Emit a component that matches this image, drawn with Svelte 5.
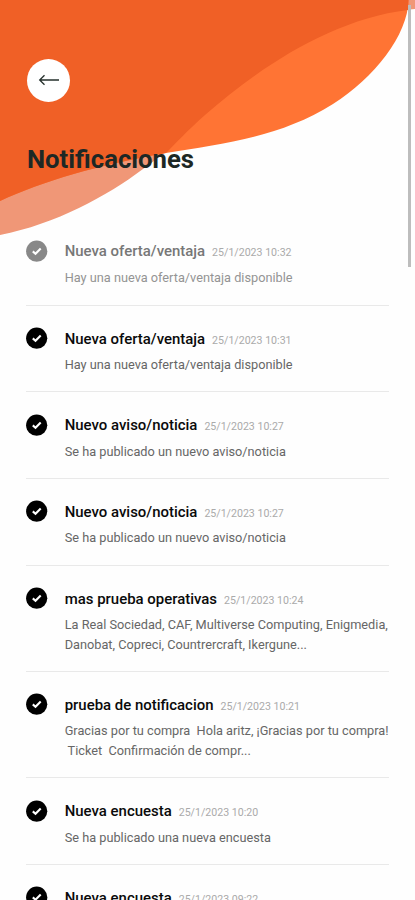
<script lang="ts">
  interface Notification {
    title: string;
    date: string;
    lines: string[];
    read?: boolean;
  }

  const notifications: Notification[] = [
    { title: "Nueva oferta/ventaja", date: "25/1/2023 10:32", lines: ["Hay una nueva oferta/ventaja disponible"], read: true },
    { title: "Nueva oferta/ventaja", date: "25/1/2023 10:31", lines: ["Hay una nueva oferta/ventaja disponible"] },
    { title: "Nuevo aviso/noticia", date: "25/1/2023 10:27", lines: ["Se ha publicado un nuevo aviso/noticia"] },
    { title: "Nuevo aviso/noticia", date: "25/1/2023 10:27", lines: ["Se ha publicado un nuevo aviso/noticia"] },
    {
      title: "mas prueba operativas",
      date: "25/1/2023 10:24",
      lines: ["La Real Sociedad, CAF, Multiverse Computing, Enigmedia,", "Danobat, Copreci, Countrercraft, Ikergune..."],
    },
    {
      title: "prueba de notificacion",
      date: "25/1/2023 10:21",
      lines: ["Gracias por tu compra  Hola aritz, ¡Gracias por tu compra!", " Ticket  Confirmación de compr..."],
    },
    { title: "Nueva encuesta", date: "25/1/2023 10:20", lines: ["Se ha publicado una nueva encuesta"] },
    { title: "Nueva encuesta", date: "25/1/2023 09:22", lines: ["Se ha publicado una nueva encuesta"] },
  ];
</script>

<main class="screen">
  <svg class="waves" viewBox="0 0 415 240" aria-hidden="true">
    <path fill="#f09777" d="M0 0H415V9C335 14 262 63 205 115C180 138 165 154 143 169C107 196 56 224 0 235Z" />
    <path fill="#ff7434" d="M0 0H408.500C408 35 374 78 333 104C279 138 220 144 166 153C98 165 43 181 0 201Z" />
    <path fill="#f06026" d="M0 0H408.500L408 10C333 19 261 66 205 115C186 132 176 143 166 153C98 165 43 181 0 201Z" />
  </svg>
  <div class="scrollbar"></div>

  <header class="header">
    <button class="back" aria-label="Volver">
      <svg viewBox="0 0 22 14" width="22" height="14" fill="none" stroke="#26302c" stroke-width="1.3">
        <path d="M21 7H2M6.500 2.200L1.700 7L6.500 11.800" />
      </svg>
    </button>
    <h1>Notificaciones</h1>
  </header>

  <ul class="list">
    {#each notifications as item}
      <li class="item" class:read={item.read}>
        <svg class="check" viewBox="0 0 22 22" width="22" height="22">
          <circle cx="10.700" cy="11.200" r="10.600" fill="currentColor" />
          <path d="M6.800 11.400L9.500 13.700L14.700 8.500" fill="none" stroke="#fff" stroke-width="2.100" />
        </svg>
        <div class="content">
          <div class="heading">
            <h2>{item.title}</h2>
            <time>{item.date}</time>
          </div>
          {#each item.lines as line}
            <p>{line}</p>
          {/each}
        </div>
      </li>
    {/each}
  </ul>
</main>

<style>
  :global(body) {
    margin: 0;
    background: #fff;
  }

  .screen {
    position: relative;
    width: 415px;
    height: 900px;
    overflow: hidden;
    background: #fefefe;
    font-family: Roboto, sans-serif;
  }

  .waves {
    position: absolute;
    top: 0;
    left: 0;
    width: 415px;
    height: 240px;
  }

  .scrollbar {
    position: absolute;
    top: 5px;
    right: 4px;
    width: 3px;
    height: 262px;
    background: #bdbdbd;
  }

  .header {
    position: relative;
    box-sizing: border-box;
    height: 219px;
    padding: 58.5px 27px 0;
  }

  .back {
    display: flex;
    align-items: center;
    justify-content: center;
    width: 43px;
    height: 43px;
    padding: 0;
    border: none;
    border-radius: 50%;
    background: #fff;
  }

  h1 {
    margin: 42px 0 0;
    font-size: 25.7px;
    line-height: 30px;
    font-weight: 700;
    color: #1d2825;
  }

  .list {
    position: relative;
    margin: 0 26px;
    padding: 0;
    list-style: none;
  }

  .item {
    display: flex;
    gap: 16.7px;
    padding: 21.2px 0 16.7px;
    border-bottom: 1px solid #e9e9e9;
  }

  .check {
    flex-shrink: 0;
    color: #000;
  }

  .content {
    flex: 1;
    padding-top: 0.9px;
  }

  .heading {
    display: flex;
    align-items: baseline;
    gap: 7px;
    height: 27.2px;
    white-space: nowrap;
  }

  h2 {
    margin: 0;
    font-size: 14.95px;
    line-height: 22px;
    font-weight: 500;
    color: #0a0a0a;
  }

  time {
    font-size: 10.6px;
    color: #aaa;
  }

  p {
    margin: 0;
    font-size: 12.74px;
    line-height: 19.7px;
    white-space: pre;
    color: #666;
  }

  .read .content {
    padding: 0;
  }

  .read .heading {
    height: 28.1px;
  }

  .read .check {
    color: #888;
  }

  .read h2 {
    color: #777;
  }

  .read p {
    color: #949494;
  }
</style>
